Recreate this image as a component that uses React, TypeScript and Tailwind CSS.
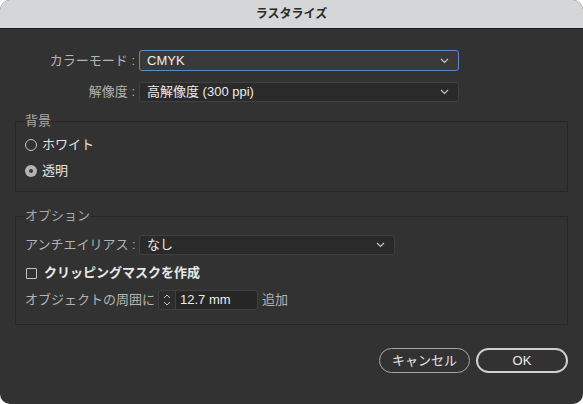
const FONT = "font-['Liberation_Sans','Noto_Sans_CJK_JP',sans-serif]";

function Chevron() {
  return (
    <svg width="9" height="6" viewBox="0 0 9 6" className="shrink-0">
      <polyline points="1,1 4.5,4.5 8,1" fill="none" stroke="#c8c8c8" strokeWidth="1.1" />
    </svg>
  );
}

function Select({ value, focused, className }: { value: string; focused?: boolean; className: string }) {
  return (
    <div
      className={[
        "flex items-center justify-between rounded-[3px] border pl-[7px] pr-[9px] text-[13px] text-[#ececec]",
        focused ? "border-[#5a8bc6] bg-[#393939]" : "border-[#404040] bg-[#2a2a2a]",
        className,
      ].join(" ")}
    >
      <span>{value}</span>
      <Chevron />
    </div>
  );
}

function Radio({ label, checked }: { label: string; checked?: boolean }) {
  return (
    <div className="flex h-[20px] items-center gap-[5px]">
      {checked ? (
        <span className="flex h-[12px] w-[12px] items-center justify-center rounded-full bg-[#b4b4b4]">
          <span className="h-[4px] w-[4px] rounded-full bg-[#3a3a3a]" />
        </span>
      ) : (
        <span className="h-[12px] w-[12px] rounded-full border border-[#c4c4c4]" />
      )}
      <span className="text-[13px] text-[#e4e4e4]">{label}</span>
    </div>
  );
}

export default function App() {
  return (
    <div className={`h-[404px] w-[583px] bg-white ${FONT}`}>
      <div className="flex h-full flex-col overflow-hidden rounded-[10px] bg-[#323232]">
        <div className="flex h-[29px] shrink-0 items-center justify-center border-b border-[#181818] bg-[#d4d6d7] text-[12px] font-bold text-[#2b2b2b]">
          ラスタライズ
        </div>

        <div className="flex flex-1 flex-col pt-[21px]">
          <div className="flex h-[21px] items-center">
            <span className="w-[135px] whitespace-nowrap text-right text-[13px] text-[#b4b4b4]">カラーモード :</span>
            <Select value="CMYK" focused className="ml-[4px] h-[21px] w-[320px]" />
          </div>
          <div className="mt-[11px] flex h-[20px] items-center">
            <span className="w-[135px] whitespace-nowrap text-right text-[13px] text-[#b4b4b4]">解像度 :</span>
            <Select value="高解像度 (300 ppi)" className="ml-[4px] h-[20px] w-[320px]" />
          </div>

          <fieldset className="mx-[15px] mt-[12px] border border-[#272727] px-[9px] pb-[10px]">
            <legend className="text-[13px] leading-[14px] text-[#a8a8a8]">背景</legend>
            <div className="mt-[7px] flex flex-col gap-[6px]">
              <Radio label="ホワイト" />
              <Radio label="透明" checked />
            </div>
          </fieldset>

          <fieldset className="mx-[15px] mt-[17px] border border-[#272727] px-[9px] pb-[14px]">
            <legend className="text-[13px] leading-[14px] text-[#a8a8a8]">オプション</legend>
            <div className="mt-[12px] flex h-[20px] items-center">
              <span className="w-[110px] whitespace-nowrap text-[13px] text-[#b4b4b4]">アンチエイリアス :</span>
              <Select value="なし" className="ml-[4px] h-[20px] w-[256px]" />
            </div>
            <div className="mt-[8px] flex h-[20px] items-center gap-[7px]">
              <span className="ml-[1px] h-[11px] w-[11px] rounded-[1px] border border-[#c4c4c4]" />
              <span className="text-[13px] font-semibold text-[#e8e8e8]">クリッピングマスクを作成</span>
            </div>
            <div className="mt-[7px] flex h-[20px] items-center">
              <span className="w-[133px] whitespace-nowrap text-[13px] text-[#b4b4b4]">オブジェクトの周囲に</span>
              <div className="flex h-[20px] w-[18px] items-center justify-center rounded-l-[3px] border border-[#404040] bg-[#2c2c2c]">
                <svg width="8" height="14" viewBox="0 0 8 14">
                  <polyline points="1,5 4,2 7,5" fill="none" stroke="#c8c8c8" strokeWidth="1" />
                  <polyline points="1,9 4,12 7,9" fill="none" stroke="#c8c8c8" strokeWidth="1" />
                </svg>
              </div>
              <div className="flex h-[20px] w-[82px] items-center rounded-r-[3px] border border-l-0 border-[#404040] bg-[#262626] pl-[4px] text-[13px] text-[#ececec]">
                12.7 mm
              </div>
              <span className="ml-[4px] text-[13px] text-[#b4b4b4]">追加</span>
            </div>
          </fieldset>

          <div className="mt-[23px] flex justify-end gap-[6px] pr-[15px]">
            <button
              type="button"
              className="flex h-[25px] w-[91px] items-center justify-center rounded-full border border-[#a8a8a8] text-[13px] text-[#e4e4e4]"
            >
              キャンセル
            </button>
            <button
              type="button"
              className="flex h-[25px] w-[92px] items-center justify-center rounded-full border-2 border-[#d0d0d0] text-[13px] text-[#ececec]"
            >
              OK
            </button>
          </div>
        </div>
      </div>
    </div>
  );
}
